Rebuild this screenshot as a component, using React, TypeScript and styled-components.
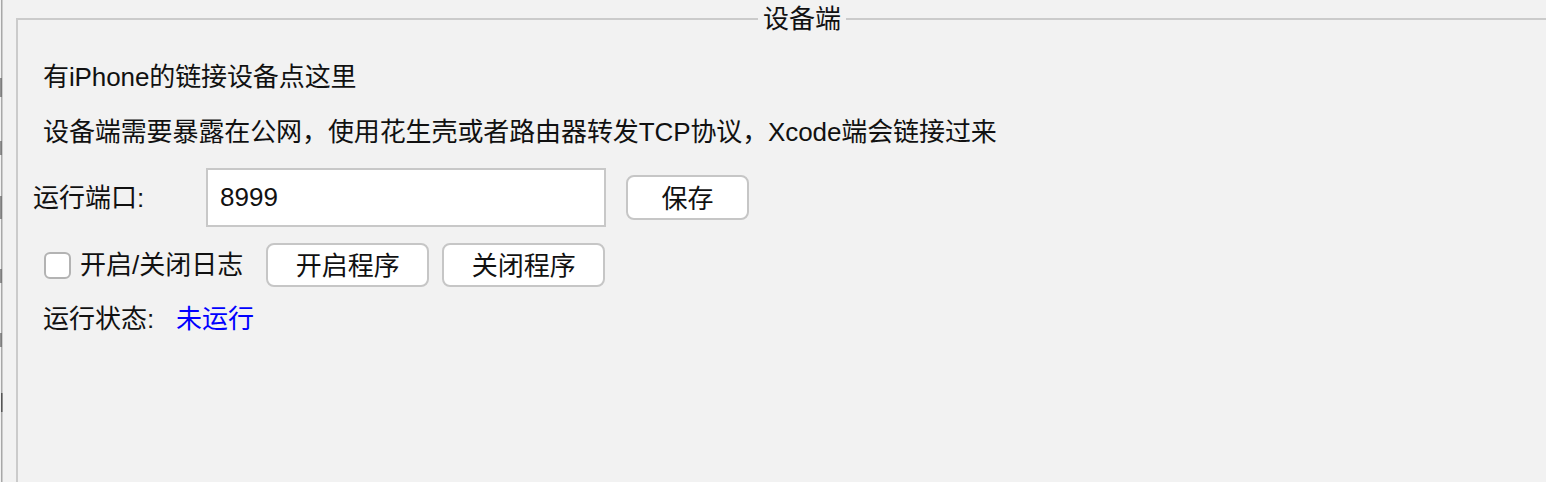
import styled, { createGlobalStyle } from 'styled-components';

const GlobalStyle = createGlobalStyle`
  html, body {
    margin: 0;
    padding: 0;
    overflow: hidden;
    background: #f2f2f2;
  }
  body {
    font-family: "Liberation Sans", "Noto Sans CJK SC", sans-serif;
    color: #111;
  }
`;

const Window = styled.div`
  display: flex;
  width: 1546px;
  height: 482px;
  overflow: hidden;
  background: #f2f2f2;
`;

const Edge = styled.div`
  flex: 0 0 16px;
  svg {
    display: block;
  }
`;

const Group = styled.fieldset`
  flex: 0 0 1580px;
  margin: 4px 0 0 0;
  padding: 0;
  min-height: 560px;
  border: 2px solid #cbcbcb;
  border-right: none;
  border-bottom: none;
  display: flex;
  flex-direction: column;
`;

const Legend = styled.legend`
  margin-left: 740px;
  padding: 0 5px;
  font-size: 26px;
  line-height: 30px;
  color: #111;
`;

const Line = styled.div<{ $top: number }>`
  margin-top: ${p => p.$top}px;
  padding-left: 25px;
  font-size: 26px;
  line-height: 30px;
  letter-spacing: -0.1px;
  white-space: nowrap;
`;

const Row = styled.div<{ $top: number; $indent: number }>`
  display: flex;
  align-items: center;
  margin-top: ${p => p.$top}px;
  padding-left: ${p => p.$indent}px;
  font-size: 26px;
  line-height: 30px;
  white-space: nowrap;
`;

const Label = styled.span<{ $width?: number }>`
  width: ${p => (p.$width ? `${p.$width}px` : 'auto')};
  flex: 0 0 auto;
`;

const Field = styled.input`
  box-sizing: border-box;
  width: 400px;
  height: 59px;
  margin: 0 20px 0 0;
  padding: 0 12px;
  border: 2px solid #c8c8c8;
  background: #fff;
  font-family: inherit;
  font-size: 26px;
  color: #111;
  outline: none;
`;

const Button = styled.button<{ $w: number; $h: number }>`
  box-sizing: border-box;
  width: ${p => p.$w}px;
  height: ${p => p.$h}px;
  margin: 0;
  padding: 0 0 3px;
  border: 2px solid #c6c6c6;
  border-radius: 8px;
  background: #fff;
  font-family: inherit;
  font-size: 26px;
  color: #111;
`;

const Check = styled.span`
  box-sizing: border-box;
  width: 27px;
  height: 27px;
  margin-right: 9px;
  border: 2px solid #b3b3b3;
  border-radius: 6px;
  background: #fff;
`;

const CheckLabel = styled.span`
  margin-right: 23px;
`;

const ButtonGroup = styled.div`
  display: flex;
  gap: 13px;
`;

const Status = styled.span`
  color: #0000ff;
`;

const ticks = [
  [78, 19],
  [141, 14],
  [196, 23],
  [269, 14],
  [333, 14],
];

export default function App() {
  return (
    <>
      <GlobalStyle />
      <Window>
        <Edge>
          <svg width="16" height="482">
            <rect x="1" y="0" width="1.5" height="482" fill="#a8a8a8" />
            {ticks.map(([y, h]) => (
              <rect key={y} x="0" y={y} width="2" height={h} fill="#6a6a6a" opacity="0.7" />
            ))}
            <rect x="1" y="393" width="1.5" height="19" fill="#555" />
          </svg>
        </Edge>
        <Group>
          <Legend>设备端</Legend>
          <Line $top={28}>有iPhone的链接设备点这里</Line>
          <Line $top={25}>设备端需要暴露在公网，使用花生壳或者路由器转发TCP协议，Xcode端会链接过来</Line>
          <Row $top={21} $indent={15}>
            <Label $width={173}>运行端口:</Label>
            <Field defaultValue="8999" />
            <Button $w={123} $h={45}>保存</Button>
          </Row>
          <Row $top={16} $indent={26}>
            <Check />
            <CheckLabel>开启/关闭日志</CheckLabel>
            <ButtonGroup>
              <Button $w={163} $h={44}>开启程序</Button>
              <Button $w={163} $h={44}>关闭程序</Button>
            </ButtonGroup>
          </Row>
          <Row $top={17} $indent={25}>
            <Label $width={133}>运行状态:</Label>
            <Status>未运行</Status>
          </Row>
        </Group>
      </Window>
    </>
  );
}
